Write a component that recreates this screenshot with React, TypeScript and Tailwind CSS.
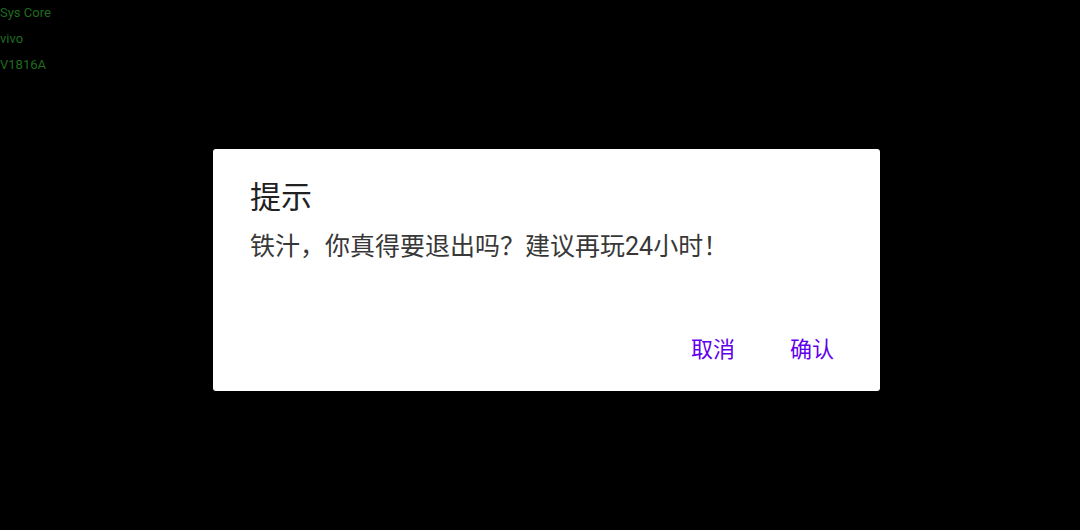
const App = () => {
	return (
		<div className="relative w-[1080px] h-[530px] bg-black overflow-hidden font-['Roboto','Noto_Sans_CJK_SC',sans-serif]">
			{/* debug overlay */}
			<div className="absolute left-0 top-0 flex flex-col text-[13px] leading-[26px] text-[#1f6b1f]">
				<span>Sys Core</span>
				<span>vivo</span>
				<span>V1816A</span>
			</div>

			<div className="pt-[149px] pl-[213px]">
				<div className="flex flex-col w-[667px] h-[242px] bg-white rounded-[3px] font-['Noto_Sans_CJK_SC',sans-serif]">
					<h2 className="pt-[27px] pl-[37px] text-[31px] leading-[38px] text-[#212121]">提示</h2>
					<p className="pt-[14px] pl-[37px] text-[25px] leading-[32px] text-[#383838]">
						铁汁，你真得要退出吗？建议再玩<span className="font-['Roboto',sans-serif]">24</span>小时！
					</p>
					<div className="mt-auto flex justify-end gap-[31px] pr-[34px] pb-[24px]">
						<button className="px-[12px] py-[6px] text-[22px] leading-[28px] text-[#6200ee]">取消</button>
						<button className="px-[12px] py-[6px] text-[22px] leading-[28px] text-[#6200ee]">确认</button>
					</div>
				</div>
			</div>
		</div>
	);
};

export default App;
